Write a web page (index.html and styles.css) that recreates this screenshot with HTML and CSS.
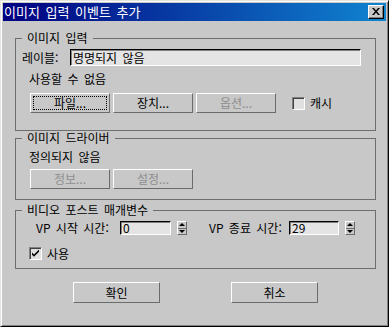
FILE: index.html
```html
<!DOCTYPE html>
<html lang="ko">
<head>
    <meta charset="UTF-8">
    <meta name="viewport" content="width=device-width, initial-scale=1.0">
    <title>이미지 입력 이벤트 추가</title>
    <link rel="stylesheet" href="styles.css">
</head>
<body>

    <div class="dialog">
        <!-- Title bar -->
        <div class="titlebar">
            <span class="title">이미지 입력 이벤트 추가</span>
            <span class="close-btn">
                <svg width="8" height="7" viewBox="0 0 8 7">
                    <path d="M0 0h2l2 2.5L6 0h2L5 3.5 8 7H6L4 4.5 2 7H0l3-3.5z" fill="#000"/>
                </svg>
            </span>
        </div>

        <div class="content">
            <!-- Image input -->
            <fieldset class="group group-input">
                <legend>이미지 입력</legend>
                <div class="field-row">
                    <label class="field-label">레이블:</label>
                    <input class="textbox name-box" type="text" value="명명되지 않음">
                </div>
                <div class="status">사용할 수 없음</div>
                <div class="button-row">
                    <button class="btn focused">파일...</button>
                    <button class="btn">장치...</button>
                    <button class="btn" disabled>옵션...</button>
                    <label class="check cache-check"><span class="check-box"></span>캐시</label>
                </div>
            </fieldset>

            <!-- Image driver -->
            <fieldset class="group group-driver">
                <legend>이미지 드라이버</legend>
                <div class="status">정의되지 않음</div>
                <div class="button-row">
                    <button class="btn" disabled>정보...</button>
                    <button class="btn" disabled>설정...</button>
                </div>
            </fieldset>

            <!-- Video post params -->
            <fieldset class="group group-vp">
                <legend>비디오 포스트 매개변수</legend>
                <div class="spin-row">
                    <label class="spin-label start-label">VP 시작 시간:</label>
                    <input class="textbox spin-box" type="text" value="0">
                    <span class="spinner"><span class="spin-up"><i></i></span><span class="spin-down"><i></i></span></span>
                    <label class="spin-label end-label">VP 종료 시간:</label>
                    <input class="textbox spin-box end-box" type="text" value="29">
                    <span class="spinner"><span class="spin-up"><i></i></span><span class="spin-down"><i></i></span></span>
                </div>
                <label class="check use-check">
                    <span class="check-box">
                        <svg width="11" height="11" viewBox="0 0 11 11">
                            <path d="M2 4.5l2 2 5-5v2.2l-5 5-2-2z" fill="#000"/>
                        </svg>
                    </span>사용
                </label>
            </fieldset>

            <div class="footer">
                <button class="btn footer-btn ok-btn">확인</button>
                <button class="btn footer-btn">취소</button>
            </div>
        </div>
    </div>

</body>
</html>
```

FILE: styles.css
```css
* {
    margin: 0;
    padding: 0;
    box-sizing: border-box;
}

body {
    margin: 0;
    background: #c8c8c8;
    font-family: "Noto Sans CJK KR", "Liberation Sans", sans-serif;
    font-size: 12px;
    line-height: 14px;
    word-spacing: 2px;
    color: #000;
}

.dialog {
    width: 389px;
    height: 327px;
    background: #c8c8c8;
    border: 1px solid;
    border-color: #e4e4e4 #000 #000 #e4e4e4;
    box-shadow: inset 1px 1px #fff, inset -1px -1px #808080;
    padding: 2px;
    display: flex;
    flex-direction: column;
}

/* Title bar */
.titlebar {
    height: 18px;
    background: linear-gradient(to right, #000080, #1084d0);
    display: flex;
    align-items: center;
    justify-content: space-between;
    padding: 0 2px 0 1px;
    color: #fff;
}

.title {
    font-size: 13px;
    line-height: 18px;
}

.close-btn {
    width: 16px;
    height: 14px;
    background: #c8c8c8;
    border: 1px solid;
    border-color: #fff #000 #000 #fff;
    box-shadow: inset -1px -1px #808080;
    display: flex;
    align-items: center;
    justify-content: center;
    padding-bottom: 1px;
}

.content {
    padding: 10px 10px 0 12px;
}

/* Group boxes */
.group {
    border: 1px solid #6e6e6e;
    padding: 4px 6px 17px 6px;
    min-inline-size: 0;
}

.group legend {
    padding: 0 5px;
    line-height: 14px;
}

.group-driver {
    padding-top: 5px;
    padding-bottom: 10px;
}

.group-vp {
    margin-top: 3px;
    padding-top: 4px;
    padding-bottom: 8px;
}

.field-row {
    display: flex;
    align-items: center;
    height: 17px;
}

.field-label {
    width: 48px;
}

.textbox {
    font-family: inherit;
    font-size: 12px;
    line-height: 14px;
    word-spacing: 2px;
    color: #000;
    background: #e4e4e4;
    border: 1px solid;
    border-color: #000 #fff #fff #000;
    box-shadow: inset 1px 1px #808080;
    outline: none;
}

.name-box {
    width: 291px;
    height: 17px;
    padding: 0 2px;
}

.status {
    margin: 6px 0 0 7px;
}

.group-driver .status {
    margin-top: 0;
}

.button-row {
    display: flex;
    align-items: center;
    gap: 3px;
    margin: 7px 0 0 8px;
}

.group-driver .button-row {
    margin-top: 5px;
}

/* Buttons */
.btn {
    width: 80px;
    height: 20px;
    font-family: inherit;
    font-size: 12px;
    line-height: 14px;
    color: #000;
    background: #c8c8c8;
    border: 1px solid;
    border-color: #fff #6b6b6b #6b6b6b #fff;
}

.btn:disabled {
    color: #8e8e8e;
}

.btn.focused {
    outline: 1px dotted #000;
    outline-offset: -4px;
}

/* Checkboxes */
.check {
    display: flex;
    align-items: center;
}

.check-box {
    width: 13px;
    height: 13px;
    background: #e0e0e0;
    border: 1px solid;
    border-color: #808080 #fff #fff #808080;
    box-shadow: inset 1px 1px #404040;
    display: flex;
    align-items: center;
    justify-content: center;
    margin-right: 5px;
}

.cache-check {
    margin-left: 13px;
}

.use-check {
    margin: 12px 0 0 7px;
    height: 13px;
}

/* Spinners */
.spin-row {
    display: flex;
    align-items: center;
    height: 14px;
}

.spin-label {
    white-space: nowrap;
}

.start-label {
    margin-left: 14px;
    width: 84px;
}

.end-label {
    margin-left: 22px;
    width: 80px;
}

.spin-box {
    width: 51px;
    height: 14px;
    padding: 0 2px;
}

.end-box {
    width: 50px;
}

.spinner {
    width: 10px;
    height: 14px;
    margin-left: 6px;
    border: 1px solid;
    border-color: #fff #6b6b6b #6b6b6b #fff;
    display: flex;
    flex-direction: column;
}

.spin-up,
.spin-down {
    flex: 1;
    display: flex;
    align-items: center;
    justify-content: center;
}

.spin-up {
    border-bottom: 1px solid #6b6b6b;
}

.spin-up i {
    border-left: 3px solid transparent;
    border-right: 3px solid transparent;
    border-bottom: 3px solid #000;
}

.spin-down i {
    border-left: 3px solid transparent;
    border-right: 3px solid transparent;
    border-top: 3px solid #000;
}

/* Footer buttons */
.footer {
    display: flex;
    gap: 71px;
    margin: 13px 0 0 58px;
}

.footer-btn {
    width: 87px;
    height: 21px;
}
```
